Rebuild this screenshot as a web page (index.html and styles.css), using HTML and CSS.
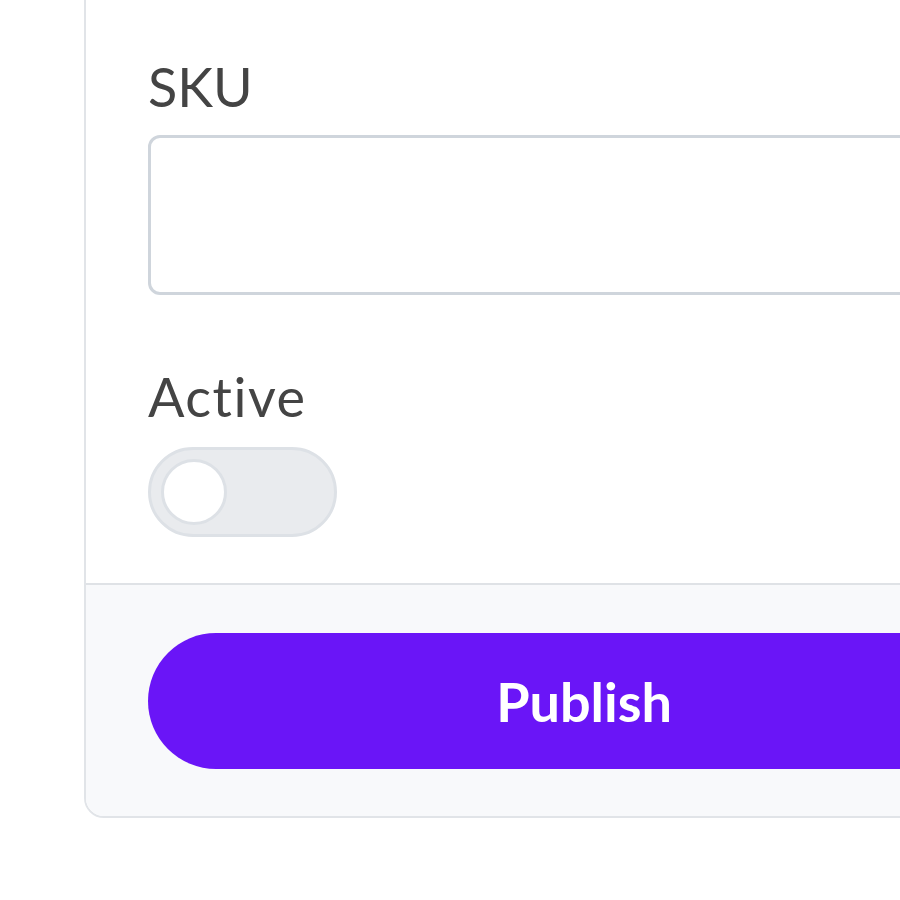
FILE: index.html
```html
<!DOCTYPE html>
<html>
<head>
<meta charset="utf-8">
<link rel="stylesheet" href="styles.css">
</head>
<body>
<div class="card">
  <div class="card-body">
    <label class="label">SKU</label>
    <div class="input"></div>
    <label class="label label-active">Active</label>
    <div class="toggle"><div class="knob"></div></div>
  </div>
  <div class="card-footer">
    <button class="btn">Publish</button>
  </div>
</div>
</body>
</html>
```
FILE: styles.css
```css
html, body {
  margin: 0;
  padding: 0;
  background: #ffffff;
  overflow: hidden;
  width: 900px;
  height: 900px;
}
body {
  padding-left: 84px;
  box-sizing: border-box;
  font-family: "Lato", "Liberation Sans", sans-serif;
}
.card {
  width: 996px;
  margin-top: -40px;
  border: 2px solid #e1e4e8;
  border-radius: 20px;
  background: #ffffff;
  overflow: hidden;
}
.card-body {
  padding: 93px 62px 46px 62px;
  display: flex;
  flex-direction: column;
}
.label {
  font-size: 54px;
  line-height: 64px;
  color: #444444;
  font-weight: 400;
}
.input {
  margin-top: 16px;
  height: 154px;
  border: 3px solid #cfd5dc;
  border-radius: 12px;
  background: #fff;
}
.label-active {
  margin-top: 70px;
  letter-spacing: 1.5px;
  font-variant-ligatures: none;
}
.toggle {
  margin-top: 18px;
  width: 173px;
  height: 84px;
  border: 3px solid #dde1e6;
  border-radius: 45px;
  background: #e9ebee;
  display: flex;
  align-items: center;
  padding-left: 10px;
  box-sizing: content-box;
}
.knob {
  width: 60px;
  height: 60px;
  border-radius: 50%;
  background: #ffffff;
  border: 3px solid #dde1e6;
}
.card-footer {
  border-top: 2px solid #dfe2e6;
  background: #f8f9fb;
  padding: 48px 62px 47px 62px;
  display: flex;
}
.btn {
  flex: 1;
  height: 136px;
  border: none;
  border-radius: 68px;
  background: #6a15f7;
  color: #ffffff;
  font-family: "Lato", "Liberation Sans", sans-serif;
  font-weight: 700;
  font-size: 54px;
  padding: 0;
}
```
